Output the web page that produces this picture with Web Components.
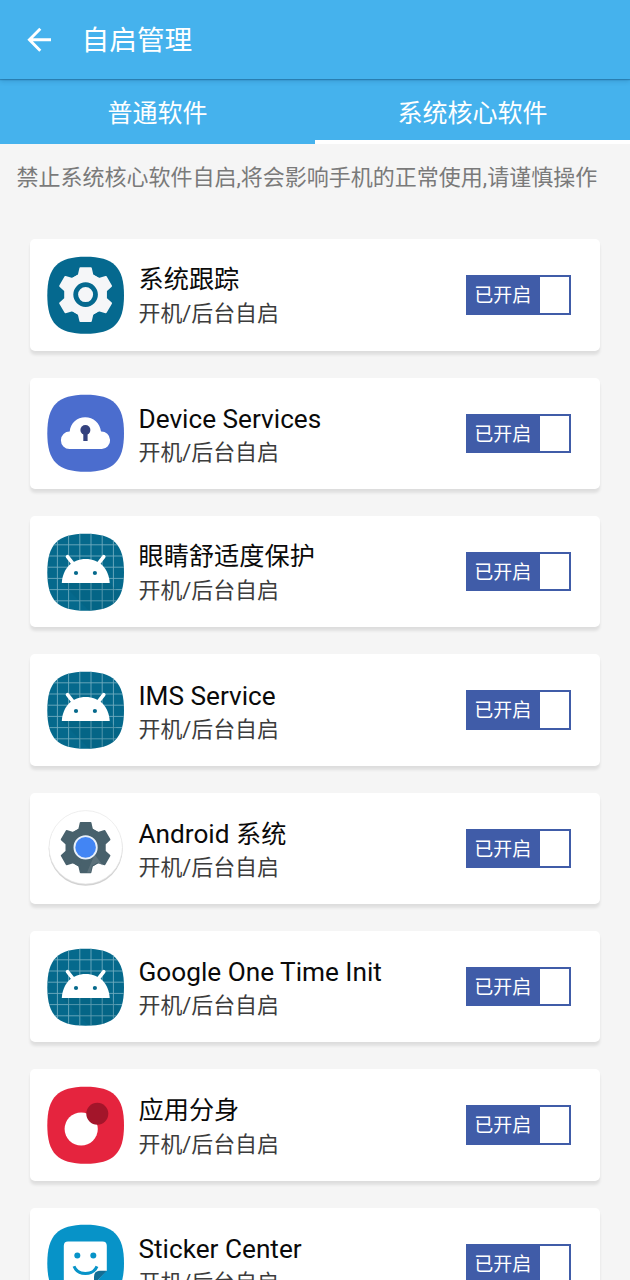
<!DOCTYPE html>
<html lang="zh-CN">
<head>
<meta charset="utf-8">
<title>自启管理</title>
<style>
html,body{margin:0;height:1280px;overflow:hidden;background:#f5f5f5}
body{font-family:Roboto,"Noto Sans CJK SC",sans-serif}
</style>
</head>
<body>
<autostart-page></autostart-page>
<script>
const SQUIRCLE = 'M45.7 6.7C73.5 6.7 84 17 84 45.2S73.5 83.7 45.7 83.7 7.3 73.5 7.3 45.2 17.9 6.7 45.7 6.7Z';
const base = color => `<path d="${SQUIRCLE}" fill="${color}"/>`;
const gear = (fill, scale = 1) => {
  let teeth = '';
  for (let a = 0; a < 360; a += 60) {
    teeth += `<path transform="rotate(${a})" d="M-5.3-26.4H5.3L6.9-19.4 13.3-15.7 0 0-13.3-15.7-6.9-19.4Z"/>`;
  }
  return `<g transform="translate(45.6 44.6) scale(${scale})" fill="${fill}" stroke="${fill}" stroke-width="1.8" stroke-linejoin="round">${teeth}</g>`;
};
const gridLines = [17.4, 28.6, 39.8, 51, 62.2, 73.4].map(p => `M${p} 0V90M0 ${p + .4}H90`).join('');
const ICONS = {
  trace: base('#05698f') + gear('#f5f6f8') +
    '<circle cx="45.6" cy="44.6" r="9.9" fill="#f5f6f8" stroke="#05698f" stroke-width="4.8"/>',
  cloud: base('#4b6dce') +
    '<path d="M29.5 61A8.6 8.6 0 0 1 29.7 43.6C30.5 35 37 29.2 45.2 29.2S60 35 61 43.6A8.7 8.7 0 0 1 61.8 61Z" fill="#fff"/><circle cx="45.4" cy="42" r="5" fill="#34427f"/><path d="M43.3 43h4.3v10h-4.3z" fill="#34427f"/>',
  android: `<clipPath id="c"><path d="${SQUIRCLE}"/></clipPath>` + base('#05698c') +
    `<g clip-path="url(#c)"><path d="${gridLines}" stroke="#6fabc0" stroke-width=".9" fill="none"/><path d="M22 56H69.5L90 76V90H55Z" fill="#034e6b" opacity=".16"/></g>` +
    '<path d="M21.8 56C22.6 41.5 32 32 45.7 32S68.9 41.5 69.7 56Z" fill="#fff"/><path d="M27.5 29.6L32.8 36.3M63.8 29.6L58.6 36.3" stroke="#fff" stroke-width="3.6" stroke-linecap="round"/><circle cx="36" cy="46" r="2.1" fill="#05698c"/><circle cx="54.9" cy="46" r="2.1" fill="#05698c"/>',
  system: '<circle cx="45.7" cy="45.8" r="37" fill="#d2d2d2"/><circle cx="45.7" cy="44.3" r="36.7" fill="#fff" stroke="#e7e7e7" stroke-width=".7"/>' +
    gear('#48616c', .94) +
    '<path d="M54 53L47 69.5H50.5L52 62.8 57.5 59.5 63 62.5 55 52Z" fill="#71848c" opacity=".5"/><circle cx="45.6" cy="44.4" r="11.2" fill="#4285f4" stroke="#e8f0fa" stroke-width="1.8"/>',
  clone: base('#e5243e') + '<circle cx="41.2" cy="49" r="16.6" fill="#fff"/><circle cx="57.3" cy="33.8" r="11" fill="#a3152a"/>',
  sticker: base('#0793c8') +
    '<path d="M28 26.2H62.5Q66.8 26.2 66.8 30.5V55L54 69H28Q23.8 69 23.8 64.7V30.5Q23.8 26.2 28 26.2Z" transform="translate(0 -2.8)" fill="#fff"/><path d="M66.8 52.8H60Q54 52.8 54 59V66Z" fill="#126d94"/><circle cx="37.3" cy="37.4" r="3" fill="#0793c8"/><circle cx="53.3" cy="37.4" r="3" fill="#0793c8"/><path d="M34 48.3Q37 55.6 45.4 55.6T57 48.3" fill="none" stroke="#0793c8" stroke-width="3"/>'
};

class Element extends HTMLElement {
  connectedCallback() {
    this.attachShadow({mode: 'open'}).innerHTML = this.render();
  }
}

customElements.define('app-icon', class extends Element {
  render() {
    return `<style>:host{display:block;width:90px;height:90px;flex:none}svg{display:block}</style>
      <svg width="90" height="90" viewBox="0 0 90 90">${ICONS[this.getAttribute('name')]}</svg>`;
  }
});

customElements.define('title-bar', class extends Element {
  render() {
    return `<style>
      :host{display:flex;align-items:center;box-sizing:border-box;height:79px;padding:3px 0 0 26px;background:#45b2ed;color:#fff;font-size:27.7px;line-height:40px;box-shadow:0 1px 1px rgba(0,50,90,.3),0 2px 5px rgba(0,50,90,.2);position:relative}
      svg{margin:0 29.5px 3px 0}
      </style>
      <svg width="26" height="26" viewBox="0 0 26 26" fill="none" stroke="#fff" stroke-width="2.9"><path d="M25 12.7H4M14.3 1.7L3.4 12.7 14.3 23.7"/></svg><slot></slot>`;
  }
});

customElements.define('tab-item', class extends Element {
  render() {
    return `<style>
      :host{display:flex;justify-content:center;flex:1;box-sizing:border-box;height:65.4px;padding-top:16.5px;color:#fff;font-size:25px;line-height:36px;background:#45b2ed}
      :host([selected]){border-bottom:4.5px solid #fff}
      </style><slot></slot>`;
  }
});

customElements.define('tab-strip', class extends Element {
  render() {
    return `<style>:host{display:flex;height:65.4px}</style><slot></slot>`;
  }
});

customElements.define('state-switch', class extends Element {
  render() {
    return `<style>
      :host{display:flex;box-sizing:border-box;width:105.5px;height:39.5px;border:2px solid #405ca8;background:#fff;flex:none}
      span{display:block;box-sizing:border-box;width:72px;padding-right:2px;background:#405ca8;color:#fff;font-size:19px;line-height:37px;text-align:center}
      </style><span><slot></slot></span>`;
  }
});

customElements.define('app-card', class extends Element {
  render() {
    return `<style>
      :host{display:flex;align-items:center;box-sizing:border-box;height:111.4px;padding:0 28.7px 0 10px;background:#fff;border-radius:5px;box-shadow:0 4px 3px rgba(0,0,0,.085),0 1px 3px rgba(0,0,0,.02)}
      .text{flex:1;padding:5px 0 0 8.5px;white-space:nowrap}
      .name{height:34px;font-size:25.2px;line-height:34px;color:#0a0a0a}
      .latin{font-size:26.2px}
      .mode{font-size:21.9px;line-height:34px;color:#3c3c3c}
      </style>
      <app-icon name="${this.getAttribute('icon')}"></app-icon>
      <div class="text"><div class="name">${this.getAttribute('name').replace(/[\x20-\x7e]+/g, '<span class="latin">$&</span>')}</div><div class="mode">开机/后台自启</div></div>
      <state-switch>已开启</state-switch>`;
  }
});

customElements.define('autostart-page', class extends Element {
  render() {
    return `<style>
      :host{display:block;width:630px;height:1280px;overflow:hidden;background:#f5f5f5}
      p{margin:0;padding:18.1px 0 0 16.5px;font-size:22px;line-height:32px;color:#7a7a7a;white-space:nowrap}
      main{display:flex;flex-direction:column;gap:26.96px;padding:44.8px 30px 0}
      app-card{flex:none}
      </style>
      <title-bar>自启管理</title-bar>
      <tab-strip><tab-item>普通软件</tab-item><tab-item selected>系统核心软件</tab-item></tab-strip>
      <p>禁止系统核心软件自启,将会影响手机的正常使用,请谨慎操作</p>
      <main>
        <app-card icon="trace" name="系统跟踪"></app-card>
        <app-card icon="cloud" name="Device Services"></app-card>
        <app-card icon="android" name="眼睛舒适度保护"></app-card>
        <app-card icon="android" name="IMS Service"></app-card>
        <app-card icon="system" name="Android 系统"></app-card>
        <app-card icon="android" name="Google One Time Init"></app-card>
        <app-card icon="clone" name="应用分身"></app-card>
        <app-card icon="sticker" name="Sticker Center"></app-card>
      </main>`;
  }
});
</script>
</body>
</html>
